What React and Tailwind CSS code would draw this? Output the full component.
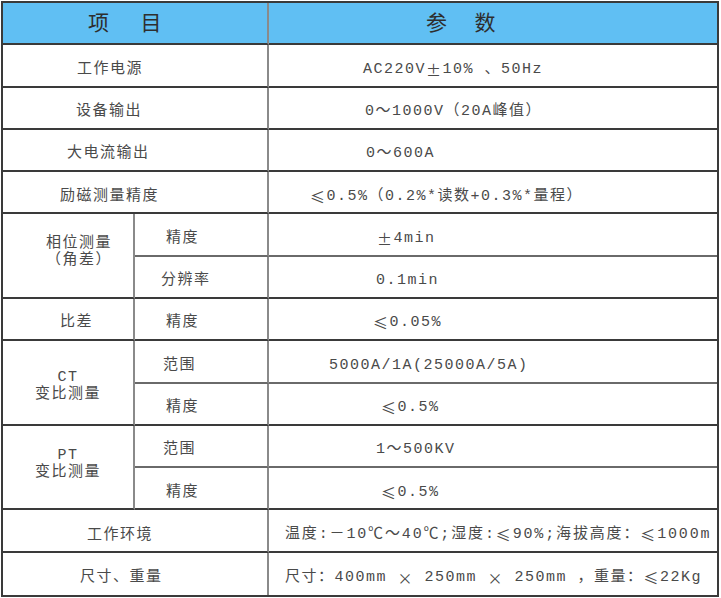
import React from 'react'

const font = { fontFamily: '"Liberation Mono", "Noto Sans CJK SC", monospace' }

// one cell of the spec table; borders drawn per side
function Cell({ className = '', children }) {
  return (
    <div className={`flex min-w-0 items-center pt-[9px] text-[15px] tracking-[1.5px] text-[#4a4a4a] whitespace-nowrap ${className}`}>
      {children}
    </div>
  )
}

// full-width symbols (≤ ± ×) come from the CJK face in the reference
const W = ({ children }) => <span className="font-['Noto_Sans_CJK_SC']">{children}</span>

const B = 'border-b-2 border-b-[#3a3a3a]'
const BS = 'border-b-2 border-b-[#6a6a6a]'
const R = 'border-r-2 border-r-[#8a8a8a]'

export default function App() {
  return (
    <div className="w-[721px] h-[598px] bg-white pt-px pl-px overflow-hidden" style={font}>
      <div className="w-[718px] h-[596px] border-2 border-[#3a3a3a] grid grid-cols-[132px_134px_minmax(0,1fr)] grid-rows-[repeat(14,minmax(0,1fr))]">
        {/* header */}
        <Cell className={`col-span-2 bg-[#60bff3] ${B} ${R} pl-[85px] !pt-[4px] text-[21px] !text-[#2e2e2e]`}>
          <span>项</span><span className="ml-[30px]">目</span>
        </Cell>
        <Cell className={`bg-[#60bff3] ${B} pl-[157px] !pt-[4px] text-[21px] !text-[#2e2e2e]`}>
          <span>参</span><span className="ml-[26px]">数</span>
        </Cell>

        <Cell className={`col-span-2 ${B} ${R} pl-[74px]`}>工作电源</Cell>
        <Cell className={`${B} pl-[94px]`}>AC220V<W>±</W>10% 、50Hz</Cell>

        <Cell className={`col-span-2 ${B} ${R} pl-[73px]`}>设备输出</Cell>
        <Cell className={`${B} pl-[96px]`}>0～1000V（20A峰值）</Cell>

        <Cell className={`col-span-2 ${B} ${R} pl-[64px]`}>大电流输出</Cell>
        <Cell className={`${B} pl-[97px]`}>0～600A</Cell>

        <Cell className={`col-span-2 ${B} ${R} pl-[57px]`}>励磁测量精度</Cell>
        <Cell className={`${B} pl-[41px]`}><W>≤</W>0.5%（0.2%*读数+0.3%*量程）</Cell>

        {/* phase */}
        <Cell className={`row-span-2 ${B} ${R} flex-col !items-start justify-center pl-[43px] !pt-0 pb-[8px] leading-[17px]`}>
          <span>相位测量</span>
          <span>（角差）</span>
        </Cell>
        <Cell className={`${BS} ${R} pl-[31px]`}>精度</Cell>
        <Cell className={`${BS} pl-[108px]`}><W>±</W>4min</Cell>
        <Cell className={`${B} ${R} pl-[26px]`}>分辨率</Cell>
        <Cell className={`${B} pl-[107px]`}>0.1min</Cell>

        <Cell className={`${B} ${R} pl-[57px]`}>比差</Cell>
        <Cell className={`${B} ${R} pl-[31px]`}>精度</Cell>
        <Cell className={`${B} pl-[104px]`}><W>≤</W>0.05%</Cell>

        {/* CT */}
        <Cell className={`row-span-2 ${B} ${R} flex-col justify-center !pt-[6px] leading-[17px]`}>
          <span>CT</span>
          <span>变比测量</span>
        </Cell>
        <Cell className={`${BS} ${R} pl-[28px]`}>范围</Cell>
        <Cell className={`${BS} pl-[60px]`}>5000A/1A(25000A/5A)</Cell>
        <Cell className={`${B} ${R} pl-[31px]`}>精度</Cell>
        <Cell className={`${B} pl-[112px]`}><W>≤</W>0.5%</Cell>

        {/* PT */}
        <Cell className={`row-span-2 ${B} ${R} flex-col justify-center !pt-0 pb-[6px] leading-[17px]`}>
          <span>PT</span>
          <span>变比测量</span>
        </Cell>
        <Cell className={`${BS} ${R} pl-[28px]`}>范围</Cell>
        <Cell className={`${BS} pl-[107px]`}>1～500KV</Cell>
        <Cell className={`${B} ${R} pl-[31px]`}>精度</Cell>
        <Cell className={`${B} pl-[112px]`}><W>≤</W>0.5%</Cell>

        <Cell className={`col-span-2 ${B} ${R} pl-[84px] !pt-[12px]`}>工作环境</Cell>
        <Cell className={`${B} pl-[16px] tracking-[1.85px]`}>温度:－10℃～40℃;湿度:<W>≤</W>90%;海拔高度：<W>≤</W>1000m</Cell>

        <Cell className={`col-span-2 ${R} pl-[77px]`}>尺寸、重量</Cell>
        <Cell className="pl-[16px] tracking-[1.3px]">尺寸：400mm&nbsp;<W>×</W>&nbsp;250mm&nbsp;<W>×</W>&nbsp;250mm&nbsp;，重量：<W>≤</W>22Kg</Cell>
      </div>
    </div>
  )
}
